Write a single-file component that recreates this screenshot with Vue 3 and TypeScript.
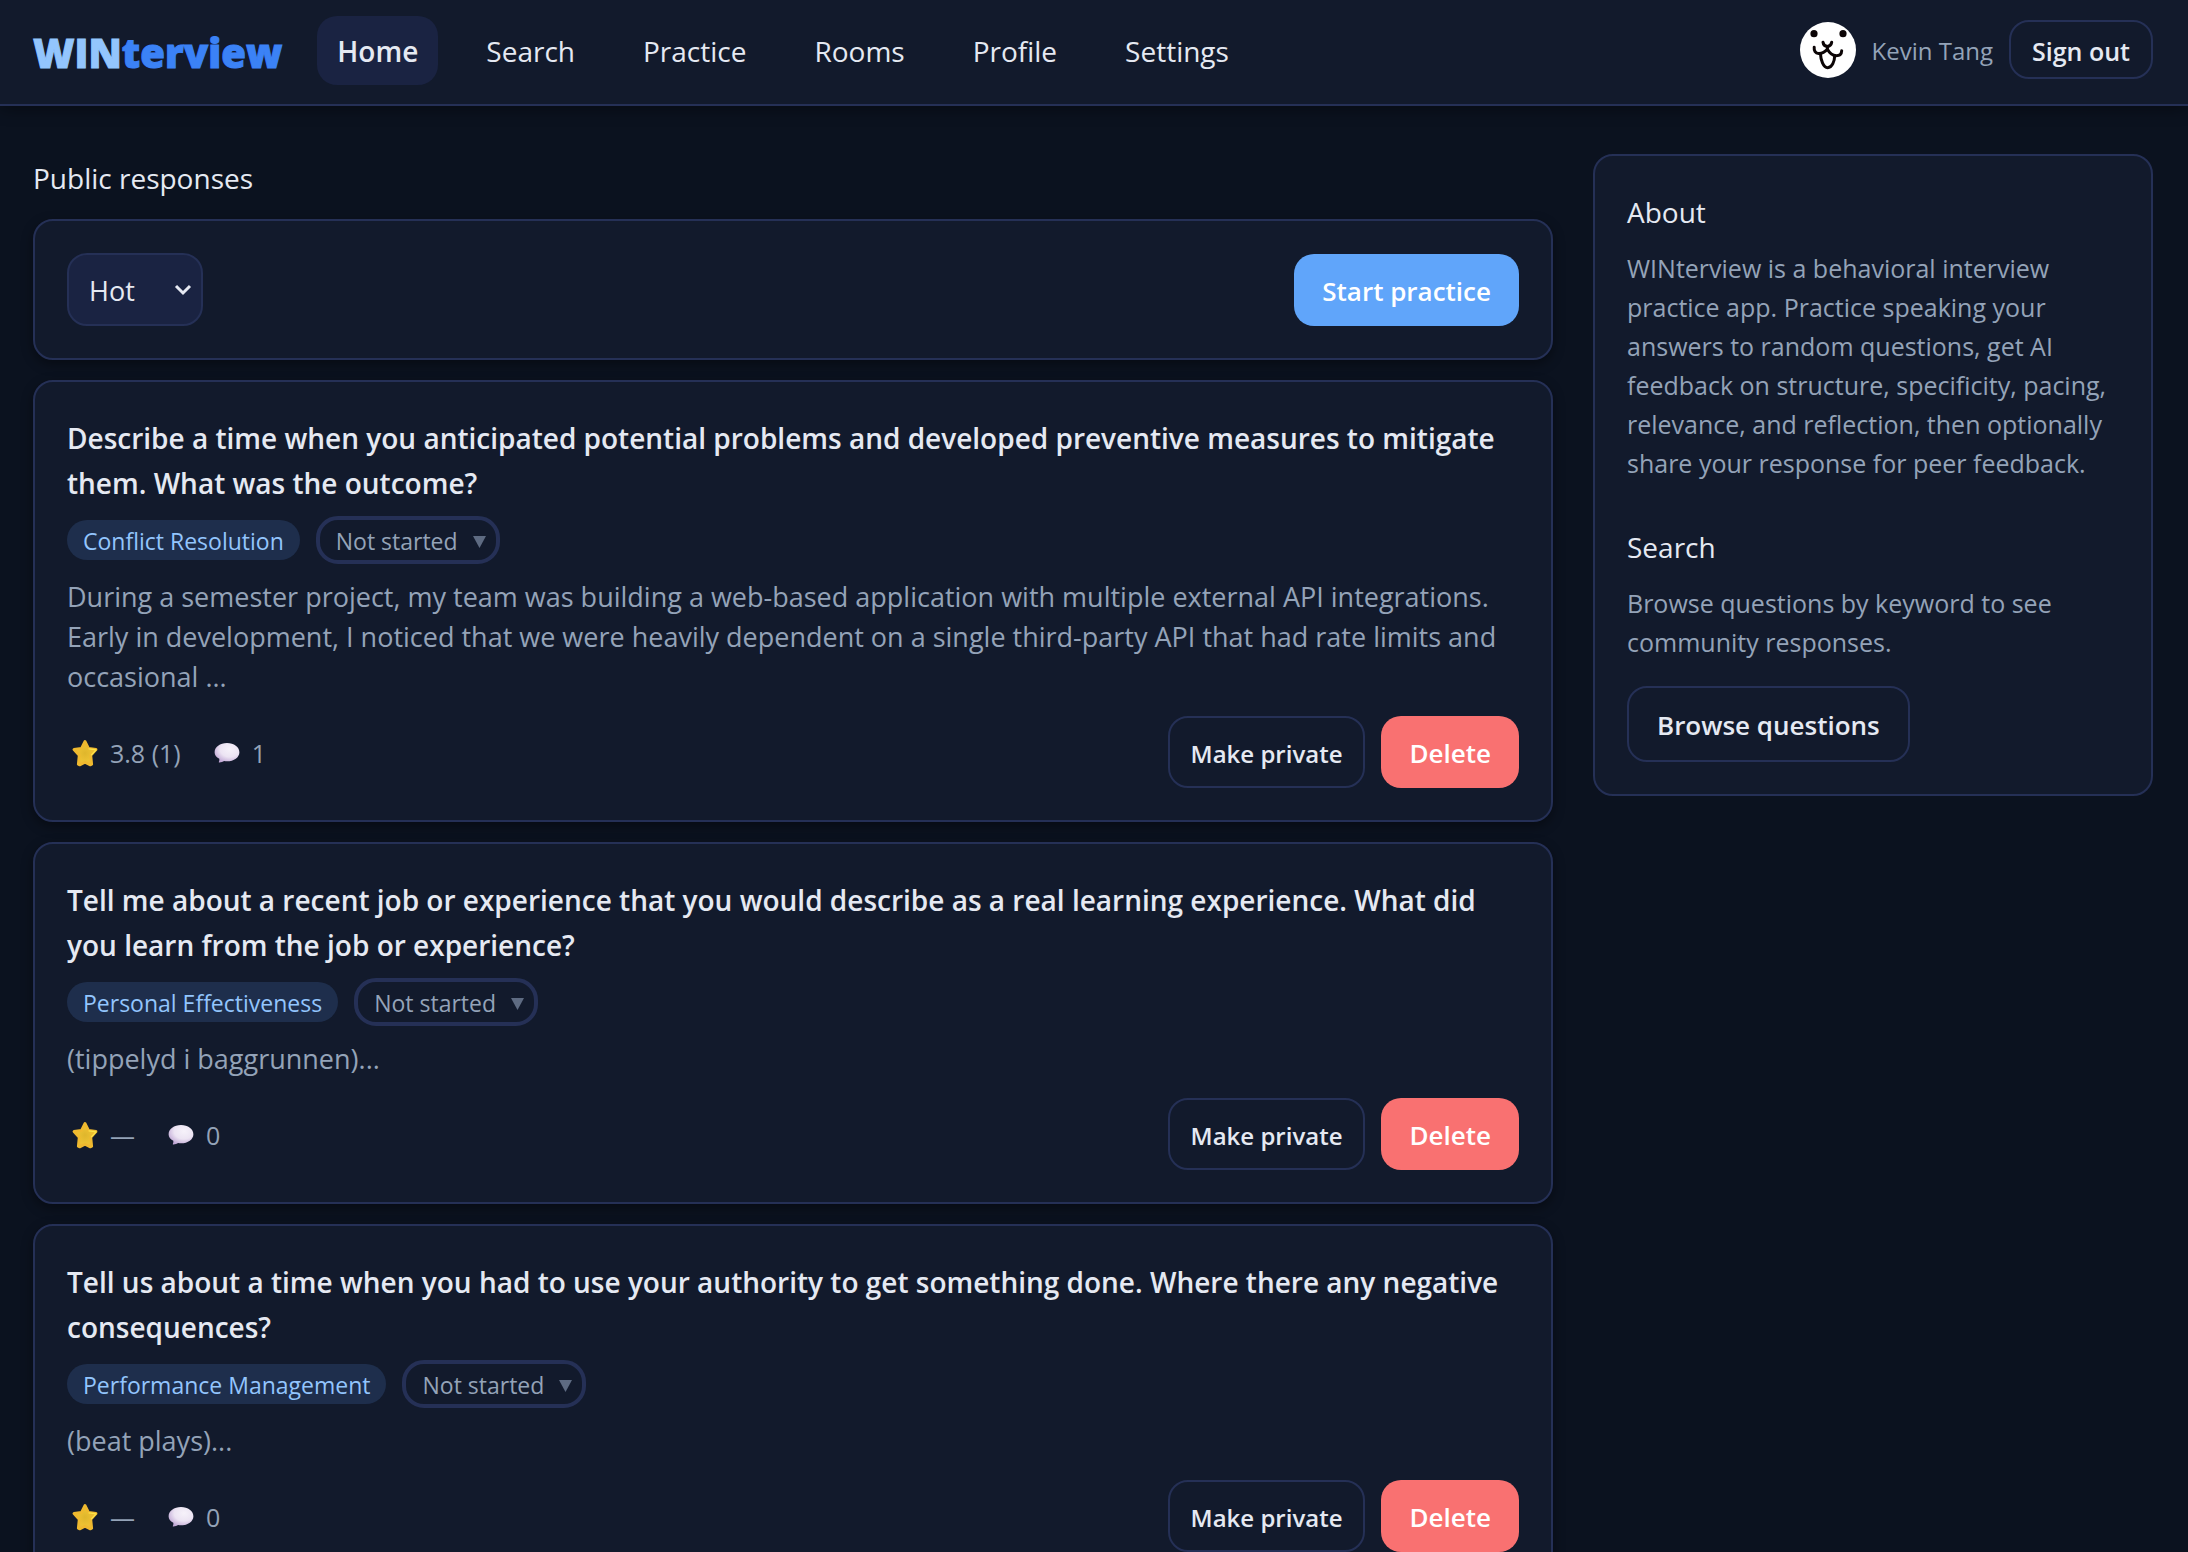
<script setup lang="ts">
import { ref } from 'vue'

interface ResponseItem {
  id: number
  question: string
  category: string
  excerpt: string
  rating: string
  comments: number
}

const navItems: string[] = ['Home', 'Search', 'Practice', 'Rooms', 'Profile', 'Settings']
const activeNav = ref('Home')
const sort = ref('Hot')
const sortOptions: string[] = ['Hot', 'New', 'Top']
const statusOptions: string[] = ['Not started', 'Started', 'Done']
const statuses = ref<Record<number, string>>({ 1: 'Not started', 2: 'Not started', 3: 'Not started' })

const responses: ResponseItem[] = [
  {
    id: 1,
    question:
      'Describe a time when you anticipated potential problems and developed preventive measures to mitigate them. What was the outcome?',
    category: 'Conflict Resolution',
    excerpt:
      'During a semester project, my team was building a web-based application with multiple external API integrations. Early in development, I noticed that we were heavily dependent on a single third-party API that had rate limits and occasional ...',
    rating: '3.8 (1)',
    comments: 1,
  },
  {
    id: 2,
    question:
      'Tell me about a recent job or experience that you would describe as a real learning experience. What did you learn from the job or experience?',
    category: 'Personal Effectiveness',
    excerpt: '(tippelyd i baggrunnen)...',
    rating: '—',
    comments: 0,
  },
  {
    id: 3,
    question:
      'Tell us about a time when you had to use your authority to get something done. Where there any negative consequences?',
    category: 'Performance Management',
    excerpt: '(beat plays)...',
    rating: '—',
    comments: 0,
  },
]
</script>

<template>
  <div class="app">
    <header class="topbar">
      <a class="logo" href="#"><span class="logo-win">WIN</span><span class="logo-rest">terview</span></a>
      <nav class="nav" aria-label="Main">
        <a
          v-for="item in navItems"
          :key="item"
          href="#"
          class="nav-link"
          :class="{ active: item === activeNav }"
          @click.prevent="activeNav = item"
          >{{ item }}</a
        >
      </nav>
      <div class="account">
        <svg class="avatar" viewBox="0 0 56 56" aria-hidden="true">
          <circle cx="28" cy="28" r="28" fill="#fff" />
          <circle cx="14" cy="11.7" r="3.6" fill="#0c0506" />
          <circle cx="43" cy="11.7" r="3.6" fill="#0c0506" />
          <g fill="none" stroke="#0c0506" stroke-width="3" stroke-linecap="round" stroke-linejoin="round">
            <path d="M23 20.2c.4 2.800 2.200 4 4.400 4.200 2.300-.3 3.900-1.700 4.300-4.200" />
            <path d="M27.400 24.500v3" />
            <path d="M14.200 25.200c-.4 3.500 1.300 6.100 4.300 6.300 3.800.2 6.600-1.600 8.900-4.200 2.100 3.700 4.900 6.300 8.800 6.400 3.500 0 5.400-2 5.500-5" />
            <path d="M20.500 32c.2 5.500 2.700 13.700 7.200 13.700S34.600 39 34.700 33.500" />
          </g>
        </svg>
        <span class="user-name">Kevin Tang</span>
        <button type="button" class="btn btn-outline btn-signout">Sign out</button>
      </div>
    </header>

    <div class="page">
      <main class="feed">
        <h1 class="feed-title">Public responses</h1>

        <section class="card toolbar">
          <div class="sort">
            <select v-model="sort" class="sort-select" aria-label="Sort responses">
              <option v-for="o in sortOptions" :key="o">{{ o }}</option>
            </select>
            <svg class="sort-arrow" viewBox="0 0 18 12" aria-hidden="true">
              <path d="M2 2l7 7 7-7" fill="none" stroke="#e6e9f2" stroke-width="3" />
            </svg>
          </div>
          <button type="button" class="btn btn-primary">Start practice</button>
        </section>

        <article v-for="r in responses" :key="r.id" class="card response">
          <h2 class="question">{{ r.question }}</h2>
          <div class="tags">
            <span class="tag">{{ r.category }}</span>
            <div class="status">
              <select v-model="statuses[r.id]" class="status-select" aria-label="Practice status">
                <option v-for="o in statusOptions" :key="o">{{ o }}</option>
              </select>
              <svg class="status-arrow" viewBox="0 0 13 12" aria-hidden="true">
                <path d="M0 0h13L6.500 12z" fill="#5e6b82" />
              </svg>
            </div>
          </div>
          <p class="excerpt">{{ r.excerpt }}</p>
          <footer class="card-footer">
            <div class="stats">
              <span class="stat">
                <svg class="emoji" viewBox="0 0 28 28" aria-hidden="true">
                  <defs>
                    <radialGradient id="starFill" cx="50%" cy="50%" r="60%">
                      <stop offset="0" stop-color="#dfb62c" />
                      <stop offset="0.6" stop-color="#edc233" />
                      <stop offset="1" stop-color="#f3b03a" />
                    </radialGradient>
                  </defs>
                  <path
                    d="M14 2.400l3.500 7 7.500 1.100-5.200 5.800.9 9-1.400.6L14 23.300 8.700 25.900 7.300 25.300l.9-9L3 10.500l7.500-1.100z"
                    fill="url(#starFill)"
                    stroke="#efb92f"
                    stroke-width="2.800"
                    stroke-linejoin="round"
                  />
                  <path d="M18 9.900l7 1-4.600 5" fill="none" stroke="#fbe44a" stroke-width="1.200" stroke-linecap="round" stroke-linejoin="round" />
                </svg>
                <span>{{ r.rating }}</span>
              </span>
              <span class="stat">
                <svg class="emoji" viewBox="0 0 28 28" aria-hidden="true">
                  <defs>
                    <radialGradient id="bubbleFill" cx="62%" cy="32%" r="72%">
                      <stop offset="0" stop-color="#f6f2fa" />
                      <stop offset="0.55" stop-color="#ece4f3" />
                      <stop offset="1" stop-color="#bfa6d4" />
                    </radialGradient>
                  </defs>
                  <path
                    d="M14 4c7 0 12.400 4 12.400 9.200S21 22.300 14 22.300c-1 0-2-.1-2.900-.2-1.200.9-2.800 1.400-4.800 1.500-.5 0-.6-.4-.4-.8.500-1 .6-2 .4-3C3.200 18.200 1.600 15.800 1.600 13.200 1.600 8 7 4 14 4z"
                    fill="url(#bubbleFill)"
                  />
                </svg>
                <span>{{ r.comments }}</span>
              </span>
            </div>
            <div class="actions">
              <button type="button" class="btn btn-outline btn-private">Make private</button>
              <button type="button" class="btn btn-danger">Delete</button>
            </div>
          </footer>
        </article>
      </main>

      <aside class="card sidebar">
        <section>
          <h2 class="side-title">About</h2>
          <p class="side-text">
            WINterview is a behavioral interview practice app. Practice speaking your answers to random questions, get AI
            feedback on structure, specificity, pacing, relevance, and reflection, then optionally share your response for
            peer feedback.
          </p>
        </section>
        <section>
          <h2 class="side-title">Search</h2>
          <p class="side-text">Browse questions by keyword to see community responses.</p>
          <button type="button" class="btn btn-outline btn-browse">Browse questions</button>
        </section>
      </aside>
    </div>
  </div>
</template>

<style>
body {
  background: #0b121f;
}
</style>

<style scoped>
.app {
  color: #e5e9f2;
  font-family: 'Open Sans', 'Noto Sans', sans-serif;
  font-size: 28px;
}
h1,
h2,
p {
  margin: 0;
}
a {
  color: inherit;
  text-decoration: none;
}
button,
select {
  margin: 0;
  font-family: inherit;
  cursor: pointer;
}

.topbar {
  position: relative;
  display: flex;
  align-items: center;
  height: 104px;
  padding: 0 35px 0 33px;
  background: #121a2c;
  border-bottom: 2px solid #253056;
  box-shadow: 0 2px 16px rgba(0, 0, 0, 0.45);
}
.logo {
  padding-top: 2px;
  font-size: 40px;
  font-weight: 800;
  line-height: 48px;
  -webkit-text-stroke: 1px currentColor;
}
.logo-win {
  color: #93c5fd;
}
.logo-rest {
  color: #3b82f6;
}
.nav {
  display: flex;
  gap: 28px;
  margin: 0 auto 4px 35px;
}
.nav-link {
  padding: 13px 20px 11px;
  border-radius: 20px;
  line-height: 45px;
}
.nav-link.active {
  background: #1a2342;
  font-weight: 600;
}
.account {
  display: flex;
  align-items: center;
  gap: 16px;
  margin-bottom: 5px;
}
.avatar {
  width: 56px;
  height: 56px;
}
.user-name {
  padding-top: 2px;
  color: #94a3b8;
  font-size: 24px;
}

.btn {
  height: 72px;
  padding: 2px 28px 0;
  border: 0;
  border-radius: 20px;
  font-weight: 600;
  font-size: 26px;
}
.btn-primary {
  background: #60a5fa;
  color: #fff;
}
.btn-danger {
  background: #f97171;
  color: #fff;
}
.btn-outline {
  border: 2px solid #253056;
  background: transparent;
  color: #e5e9f2;
}
.btn-signout {
  height: 59px;
  padding: 2px 21px 0;
  font-size: 25px;
}
.btn-private {
  padding: 2px 21px 0;
  font-size: 24px;
}
.btn-browse {
  height: 76px;
  margin-top: 24px;
}

.page {
  display: grid;
  grid-template-columns: minmax(0, 1fr) 560px;
  align-items: start;
  gap: 40px;
  padding: 48px 35px 48px 33px;
}
.feed {
  display: flex;
  flex-direction: column;
  gap: 20px;
}
.feed-title {
  padding-top: 3px;
  font-size: 28px;
  font-weight: 400;
  line-height: 42px;
}
.card {
  padding: 32px;
  border: 2px solid #253056;
  border-radius: 20px;
  background: #121a2c;
  box-shadow: 0 4px 12px rgba(0, 0, 0, 0.4);
}
.toolbar {
  display: flex;
  align-items: center;
  justify-content: space-between;
}
.sort,
.status {
  position: relative;
  display: flex;
}
.sort-select {
  appearance: none;
  width: 136px;
  height: 73px;
  padding: 2px 20px 0;
  border: 2px solid #253056;
  border-radius: 20px;
  background: #1a2342;
  color: #e5e9f2;
  font-size: 27px;
}
.sort-arrow {
  position: absolute;
  top: 31px;
  right: 11px;
  width: 18px;
  height: 12px;
  pointer-events: none;
}

.question {
  padding-top: 2px;
  font-size: 28px;
  font-weight: 600;
  line-height: 45px;
}
.tags {
  display: flex;
  align-items: center;
  gap: 16px;
  margin: 10px 0 13px;
}
.tag {
  padding: 2px 16px 0;
  border-radius: 20px;
  background: #1e2e4c;
  color: #93c5fd;
  font-size: 23px;
  line-height: 38px;
}
.status-select {
  appearance: none;
  width: 184px;
  height: 48px;
  padding: 2px 16px 0;
  border: 4px solid #253056;
  border-radius: 22px;
  background: transparent;
  color: #94a3b8;
  font-size: 23px;
}
.status-arrow {
  position: absolute;
  top: 20px;
  right: 14px;
  width: 13px;
  height: 12px;
  pointer-events: none;
}
.excerpt {
  color: #94a3b8;
  font-size: 27px;
  line-height: 40px;
}
.card-footer {
  display: flex;
  align-items: center;
  justify-content: space-between;
  margin-top: 19px;
}
.stats {
  display: flex;
  gap: 32px;
  padding: 2px 0 0 4px;
  color: #94a3b8;
  font-size: 25px;
}
.stat {
  display: flex;
  align-items: center;
  gap: 11px;
}
.emoji {
  width: 28px;
  height: 28px;
}
.actions {
  display: flex;
  gap: 16px;
}

.sidebar {
  display: flex;
  flex-direction: column;
  gap: 40px;
  box-shadow: none;
}
.side-title {
  padding-top: 3px;
  font-size: 28px;
  font-weight: 400;
  line-height: 42px;
}
.side-text {
  margin-top: 16px;
  color: #94a3b8;
  font-size: 25px;
  line-height: 39px;
}
</style>
